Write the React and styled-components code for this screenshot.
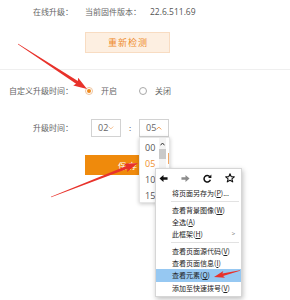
import React from "react";
import styled, { createGlobalStyle } from "styled-components";

const GlobalStyle = createGlobalStyle`
  html, body { margin: 0; padding: 0; background: #fff; }
  body { font-family: "Noto Sans CJK SC", "Noto Sans", sans-serif; color: #666; }
`;

const Page = styled.div`
  position: relative;
  width: 290px;
  height: 300px;
  overflow: hidden;
  background: #fff;
`;

const Section = styled.div`
  display: flex;
  flex-direction: column;
  padding-top: ${(p) => p.$pt || 0}px;
`;

const FormRow = styled.div`
  display: grid;
  grid-template-columns: 73px 1fr;
  column-gap: 12px;
  align-items: center;
  height: ${(p) => p.$h}px;
  margin-top: ${(p) => p.$mt || 0}px;
`;

const Label = styled.span`
  text-align: right;
  font-size: 8px;
  line-height: 12px;
  color: #666;
  white-space: nowrap;
`;

const ValueText = styled.span`
  font-size: 8px;
  line-height: 12px;
  color: #666;
  white-space: nowrap;
`;

const Version = styled.span`
  margin-left: 9px;
  font-family: "Open Sans", "Noto Sans", sans-serif;
  font-size: 8.5px;
  color: #555;
`;

const RecheckButton = styled.button`
  grid-column: 2;
  width: 85px;
  height: 21px;
  padding: 0;
  border: 1px solid #f8dcc2;
  background: #fdefe1;
  color: #ee8a2a;
  font-family: inherit;
  font-size: 9px;
  letter-spacing: 1px;
  text-indent: 1px;
`;

const SaveButton = styled.button`
  grid-column: 2;
  width: 85px;
  height: 20px;
  padding: 0;
  border: none;
  background: #ef8a0c;
  color: #fff;
  font-family: inherit;
  font-size: 8.5px;
  white-space: pre;
`;

const Divider = styled.div`
  height: 1px;
  margin-top: 16px;
  background: #efefef;
`;

const RadioGroup = styled.div`
  display: flex;
  align-items: center;
  gap: 22px;
`;

const RadioOption = styled.label`
  display: flex;
  align-items: center;
  gap: 8px;
  font-size: 8px;
  line-height: 12px;
  color: #666;
`;

const RadioDot = styled.span`
  box-sizing: border-box;
  width: 8px;
  height: 8px;
  border-radius: 50%;
  border: 1px solid ${(p) => (p.$checked ? "#eec39c" : "#a8a8a8")};
  display: flex;
  align-items: center;
  justify-content: center;
  &::after {
    content: "";
    width: 4px;
    height: 4px;
    border-radius: 50%;
    background: ${(p) => (p.$checked ? "#f08a1c" : "transparent")};
  }
`;

const TimePicker = styled.div`
  display: flex;
  align-items: center;
  margin-left: 6px;
`;

const SelectBox = styled.div`
  position: relative;
  box-sizing: border-box;
  width: 30px;
  height: 18px;
  border: 1px solid #d2d2d2;
  background: #fff;
  display: flex;
  align-items: center;
  justify-content: space-between;
  padding: 0 6px;
  font-family: "Open Sans", "Noto Sans", sans-serif;
  font-size: 9px;
  color: #666;
`;

const Colon = styled.span`
  width: 18px;
  text-align: center;
  font-size: 8px;
  color: #666;
`;

const OptionList = styled.div`
  position: absolute;
  top: calc(100% + 1px);
  left: -1px;
  width: 31px;
  height: 66px;
  box-sizing: border-box;
  padding-top: 2.5px;
  overflow: hidden;
  background: #fff;
  border: 1px solid #e6e6e6;
  box-shadow: 0 1px 4px rgba(0, 0, 0, 0.22);
  z-index: 2;
`;

const OptionItem = styled.div`
  height: 16px;
  line-height: 16px;
  padding-left: 5px;
  font-size: 9px;
  color: ${(p) => (p.$selected ? "#f0902e" : "#555")};
`;

const ScrollTrack = styled.div`
  position: absolute;
  top: 0;
  left: 19px;
  width: 7px;
  height: 100%;
  background: #f4f4f4;
`;

const ScrollThumb = styled.div`
  position: absolute;
  top: 11px;
  left: 0;
  width: 7px;
  height: 10px;
  background: #c9c9c9;
`;

const ScrollUp = styled.svg`
  position: absolute;
  top: 4px;
  left: 1px;
`;

const FocusMark = styled.div`
  position: absolute;
  top: 15px;
  right: 0;
  width: 1px;
  height: 11px;
  background: #f2a866;
`;

const ContextMenu = styled.div`
  position: absolute;
  left: 155px;
  top: 168px;
  width: 87px;
  box-sizing: border-box;
  padding-bottom: 2px;
  background: #fff;
  border: 1px solid #d6d6d6;
  box-shadow: 1px 2px 5px rgba(0, 0, 0, 0.25);
  z-index: 3;
  font-size: 7px;
  color: #222;
`;

const NavRow = styled.div`
  height: 18px;
  display: flex;
  align-items: center;
  gap: 13px;
  padding-left: 3px;
`;

const MenuItem = styled.div`
  height: ${(p) => (p.$active ? 13 : 12)}px;
  line-height: ${(p) => (p.$active ? 13 : 12)}px;
  display: flex;
  justify-content: space-between;
  padding: 0 6px 0 16px;
  background: ${(p) => (p.$active ? "#96c8f2" : "transparent")};
  white-space: nowrap;
  u { text-decoration: underline; }
`;

const SubArrow = styled.span`
  color: #777;
  font-size: 6px;
`;

const MenuSeparator = styled.div`
  height: 1px;
  margin: 2px 2px 2px 15px;
  background: #e2e2e2;
`;

const Annotations = styled.svg`
  position: absolute;
  left: 0;
  top: 0;
  z-index: 5;
  pointer-events: none;
`;

function arrowPoints(x1, y1, x2, y2, head, headW, shaftW) {
  const dx = x2 - x1;
  const dy = y2 - y1;
  const L = Math.hypot(dx, dy);
  const ux = dx / L;
  const uy = dy / L;
  const nx = -uy;
  const ny = ux;
  const bx = x2 - ux * head;
  const by = y2 - uy * head;
  const wx = bx - ux * 1.5;
  const wy = by - uy * 1.5;
  const pts = [
    [x1 + nx * 0.3, y1 + ny * 0.3],
    [bx + nx * shaftW, by + ny * shaftW],
    [wx + nx * headW, wy + ny * headW],
    [x2, y2],
    [wx - nx * headW, wy - ny * headW],
    [bx - nx * shaftW, by - ny * shaftW],
    [x1 - nx * 0.3, y1 - ny * 0.3],
  ];
  return pts.map((p) => p.join(",")).join(" ");
}

const Chevron = ({ up, color }) => (
  <svg width="6" height="4" viewBox="0 0 6 4">
    <polyline
      points={up ? "0.5,3.5 3,1 5.5,3.5" : "0.5,0.5 3,3 5.5,0.5"}
      fill="none"
      stroke={color}
      strokeWidth="0.9"
    />
  </svg>
);

const BackIcon = ({ color }) => (
  <svg width="9" height="9" viewBox="0 0 10 9">
    <path d="M0.5 4.5 L5 0.5 L5 3 L9.5 3 L9.5 6 L5 6 L5 8.5 Z" fill={color} />
  </svg>
);

const ForwardIcon = ({ color }) => (
  <svg width="9" height="9" viewBox="0 0 10 9">
    <path d="M9.5 4.5 L5 0.5 L5 3 L0.5 3 L0.5 6 L5 6 L5 8.5 Z" fill={color} />
  </svg>
);

const ReloadIcon = () => (
  <svg width="9" height="9" viewBox="0 0 10 10">
    <path d="M7.6 3 A3.6 3.6 0 1 0 8.2 6.4" fill="none" stroke="#111" strokeWidth="1.7" />
    <path d="M9.3 0.6 L9.3 4.4 L5.6 4.4 Z" fill="#111" />
  </svg>
);

const StarIcon = () => (
  <svg width="10" height="10" viewBox="0 0 10 10">
    <polygon
      points="5,0.8 6.2,3.6 9.3,3.8 6.9,5.8 7.7,8.9 5,7.2 2.3,8.9 3.1,5.8 0.7,3.8 3.8,3.6"
      fill="none"
      stroke="#111"
      strokeWidth="1.1"
      strokeLinejoin="round"
    />
  </svg>
);

const options = ["00", "05", "10", "15"];

export default function App() {
  return (
    <>
      <GlobalStyle />
      <Page>
        <Section $pt={6}>
          <FormRow $h={12}>
            <Label>在线升级：</Label>
            <ValueText>
              当前固件版本：<Version>22.6.511.69</Version>
            </ValueText>
          </FormRow>
          <FormRow $h={21} $mt={14}>
            <RecheckButton>重新检测</RecheckButton>
          </FormRow>
        </Section>
        <Divider />
        <Section>
          <FormRow $h={14} $mt={14}>
            <Label>自定义升级时间：</Label>
            <RadioGroup>
              <RadioOption>
                <RadioDot $checked />
                开启
              </RadioOption>
              <RadioOption>
                <RadioDot />
                关闭
              </RadioOption>
            </RadioGroup>
          </FormRow>
          <FormRow $h={19} $mt={20}>
            <Label>升级时间：</Label>
            <TimePicker>
              <SelectBox>
                <span>02</span>
                <Chevron color="#f2b47e" />
              </SelectBox>
              <Colon>:</Colon>
              <SelectBox>
                <span>05</span>
                <Chevron up color="#f08a30" />
                <OptionList>
                  {options.map((o) => (
                    <OptionItem key={o} $selected={o === "05"}>
                      {o}
                    </OptionItem>
                  ))}
                  <ScrollTrack>
                    <ScrollUp width="5" height="4" viewBox="0 0 5 4">
                      <polyline points="0.5,3.3 2.5,1 4.5,3.3" fill="none" stroke="#333" strokeWidth="1" />
                    </ScrollUp>
                    <ScrollThumb />
                  </ScrollTrack>
                  <FocusMark />
                </OptionList>
              </SelectBox>
            </TimePicker>
          </FormRow>
          <FormRow $h={20} $mt={18}>
            <SaveButton>{"保 存"}</SaveButton>
          </FormRow>
        </Section>

        <ContextMenu>
          <NavRow>
            <BackIcon color="#111" />
            <ForwardIcon color="#8c8c8c" />
            <ReloadIcon />
            <StarIcon />
          </NavRow>
          <MenuItem $first>
            <span>
              将页面另存为(<u>P</u>)...
            </span>
          </MenuItem>
          <MenuSeparator />
          <MenuItem>
            <span>
              查看背景图像(<u>W</u>)
            </span>
          </MenuItem>
          <MenuItem>
            <span>
              全选(<u>A</u>)
            </span>
          </MenuItem>
          <MenuItem>
            <span>
              此框架(<u>H</u>)
            </span>
            <SubArrow>&gt;</SubArrow>
          </MenuItem>
          <MenuSeparator />
          <MenuItem>
            <span>
              查看页面源代码(<u>V</u>)
            </span>
          </MenuItem>
          <MenuItem>
            <span>
              查看页面信息(<u>I</u>)
            </span>
          </MenuItem>
          <MenuItem $active>
            <span>
              查看元素(<u>Q</u>)
            </span>
          </MenuItem>
          <MenuItem>
            <span>
              添加至快速拨号(<u>V</u>)
            </span>
          </MenuItem>
        </ContextMenu>

        <Annotations width="290" height="300" viewBox="0 0 290 300">
          <polygon points={arrowPoints(18, 44, 87, 89, 12, 4.5, 1.6)} fill="#e8322b" />
          <polygon points={arrowPoints(51, 197, 138, 163, 12, 4.5, 1.6)} fill="#e8322b" />
          <polygon points={arrowPoints(240, 270.5, 214, 277, 9, 3.5, 1.3)} fill="#e8322b" />
        </Annotations>
      </Page>
    </>
  );
}
